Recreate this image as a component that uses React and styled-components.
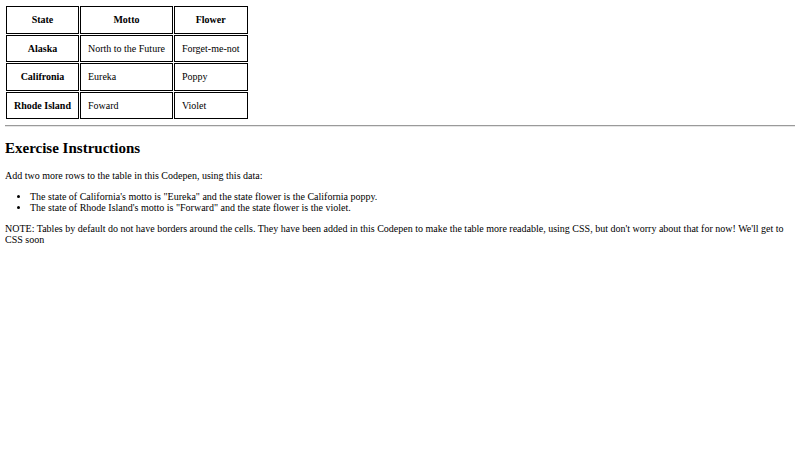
import React from "react";
import styled, { createGlobalStyle } from "styled-components";

const GlobalStyle = createGlobalStyle`
  body {
    margin: 5px;
    font-family: "Liberation Serif", "Times New Roman", serif;
    font-size: 10px;
    color: #000;
    background: #fff;
  }
`;

const Table = styled.table`
  border-collapse: separate;
  border-spacing: 1.25px;
`;

const Cell = styled.td`
  border: 1px solid #000;
  padding: 7.25px 7px;
  font-weight: ${(p) => (p.$head ? "bold" : "normal")};
  text-align: ${(p) => (p.$head ? "center" : "left")};
`;

const Rule = styled.hr`
  margin: 5px 0;
  border: none;
  border-top: 1px solid #9a9a9a;
  border-bottom: 1px solid #e6e6e6;
`;

const Heading = styled.h2`
  font-size: 15px;
  margin: 13px 0 12.5px;
`;

const Para = styled.p`
  margin: 10px 0;
`;

const List = styled.ul`
  margin: 10px 0;
  padding-left: 25px;
`;

const rows = [
  ["Alaska", "North to the Future", "Forget-me-not"],
  ["Califronia", "Eureka", "Poppy"],
  ["Rhode Island", "Foward", "Violet"],
];

const App = () => {
  return (
    <>
      <GlobalStyle />
      <Table>
        <tbody>
          <tr>
            <Cell as="th" $head>State</Cell>
            <Cell as="th" $head>Motto</Cell>
            <Cell as="th" $head>Flower</Cell>
          </tr>
          {rows.map(([state, motto, flower]) => (
            <tr key={state}>
              <Cell as="th" $head>{state}</Cell>
              <Cell>{motto}</Cell>
              <Cell>{flower}</Cell>
            </tr>
          ))}
        </tbody>
      </Table>
      <Rule />
      <Heading>Exercise Instructions</Heading>
      <Para>Add two more rows to the table in this Codepen, using this data:</Para>
      <List>
        <li>
          The state of California's motto is "Eureka" and the state flower is
          the California poppy.
        </li>
        <li>
          The state of Rhode Island's motto is "Forward" and the state flower
          is the violet.
        </li>
      </List>
      <Para>
        NOTE: Tables by default do not have borders around the cells. They have
        been added in this Codepen to make the table more readable, using CSS,
        but don't worry about that for now! We'll get to CSS soon
      </Para>
    </>
  );
};

export default App;
